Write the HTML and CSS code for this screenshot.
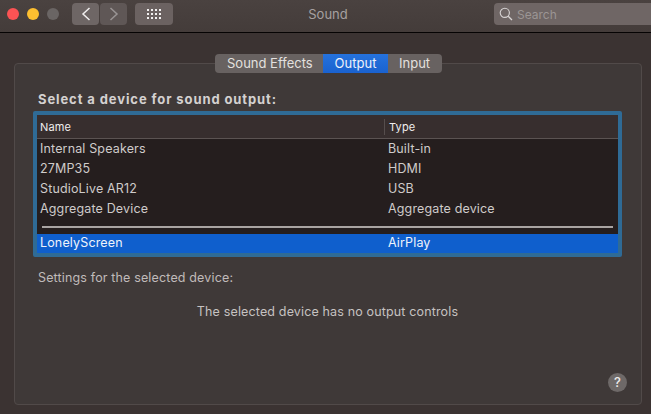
FILE: index.html
```html
<!DOCTYPE html>
<html lang="en">
<head>
<meta charset="utf-8">
<title>Sound</title>
<link rel="stylesheet" href="styles.css">
</head>
<body>
<div class="window">
  <header class="titlebar">
    <div class="lights">
      <span class="light red"></span>
      <span class="light yellow"></span>
      <span class="light grey"></span>
    </div>
    <div class="nav">
      <button class="tbtn back"><svg width="10" height="14" viewBox="0 0 10 14"><path d="M8.5 1 L2 7 L8.5 13" fill="none" stroke="#f0eeee" stroke-width="1.5"/></svg></button>
      <button class="tbtn fwd"><svg width="10" height="14" viewBox="0 0 10 14"><path d="M1.5 1 L8 7 L1.5 13" fill="none" stroke="#999494" stroke-width="1.5"/></svg></button>
    </div>
    <button class="tbtn grid"><svg width="15" height="11" viewBox="0 0 15 11" fill="#f2f0f0"><rect x="0" y="0" width="2" height="2"/><rect x="4" y="0" width="2" height="2"/><rect x="8" y="0" width="2" height="2"/><rect x="12" y="0" width="2" height="2"/><rect x="0" y="4" width="2" height="2"/><rect x="4" y="4" width="2" height="2"/><rect x="8" y="4" width="2" height="2"/><rect x="12" y="4" width="2" height="2"/><rect x="0" y="8" width="2" height="2"/><rect x="4" y="8" width="2" height="2"/><rect x="8" y="8" width="2" height="2"/><rect x="12" y="8" width="2" height="2"/></svg></button>
    <div class="title">Sound</div>
    <div class="search">
      <svg width="14" height="14" viewBox="0 0 14 14"><circle cx="5.8" cy="5.8" r="4.6" fill="none" stroke="#d8d4d4" stroke-width="1.1"/><path d="M9.2 9.2 L13 13" stroke="#d8d4d4" stroke-width="1.3"/></svg>
      <span>Search</span>
    </div>
  </header>
  <main class="content">
    <div class="panel">
      <nav class="tabs">
        <span class="tab effects">Sound Effects</span>
        <span class="tab active">Output</span>
        <span class="tab input">Input</span>
      </nav>
      <h2 class="heading">Select a device for sound output:</h2>
      <div class="table">
        <div class="thead">
          <div class="th name">Name</div>
          <div class="th type">Type</div>
        </div>
        <div class="tbody">
          <div class="row"><span class="name">Internal Speakers</span><span class="type">Built-in</span></div>
          <div class="row"><span class="name">27MP35</span><span class="type">HDMI</span></div>
          <div class="row"><span class="name">StudioLive AR12</span><span class="type">USB</span></div>
          <div class="row"><span class="name">Aggregate Device</span><span class="type">Aggregate device</span></div>
          <div class="sep"></div>
          <div class="row selected"><span class="name">LonelyScreen</span><span class="type">AirPlay</span></div>
        </div>
      </div>
      <p class="settings">Settings for the selected device:</p>
      <p class="none">The selected device has no output controls</p>
      <div class="help-row"><span class="help">?</span></div>
    </div>
  </main>
</div>
</body>
</html>
```
FILE: styles.css
```css
* { box-sizing: border-box; }
html, body { margin: 0; padding: 0; }
body {
  width: 651px;
  height: 414px;
  overflow: hidden;
  background: #3b3332;
  font-family: Inter, "Liberation Sans", sans-serif;
  font-size: 12.5px;
  letter-spacing: 0.15px;
  color: #cfcbca;
}
.window { display: flex; flex-direction: column; height: 414px; }
.titlebar {
  position: relative;
  flex: none;
  height: 33px;
  display: flex;
  align-items: center;
  padding: 0 0 4px 7px;
  background: linear-gradient(#4a4240, #443c3a);
  border-bottom: 1px solid #050303;
}
.lights { display: flex; gap: 8px; }
.light { width: 12px; height: 12px; border-radius: 50%; }
.red { background: #fb5354; }
.yellow { background: #fdbf30; }
.grey { background: #6a6564; }
.nav { display: flex; gap: 1px; margin-left: 13px; }
.tbtn {
  display: flex;
  align-items: center;
  justify-content: center;
  height: 22px;
  padding: 0;
  border: 0;
  border-radius: 4px;
  background: #6b6261;
}
.back { width: 27px; background: #6e6665; }
.fwd { width: 27px; background: #5f5756; }
.grid { width: 38px; margin-left: 8px; }
.title {
  position: absolute;
  left: 0;
  right: 0;
  top: 6px;
  text-align: center;
  font-size: 13px;
  line-height: 16px;
  letter-spacing: 0;
  color: #a6a1a0;
  padding-left: 5px;
}
.search {
  display: flex;
  align-items: center;
  gap: 4px;
  width: 157px;
  height: 22px;
  margin-left: auto;
  padding-left: 5px;
  border-radius: 4px 0 0 4px;
  background: #6f6665;
  color: #9b9594;
  font-size: 12px;
  letter-spacing: 0;
}
.content { flex: 1; padding: 30px 9px 9px 14px; }
.panel {
  height: 342px;
  border: 1px solid #514a49;
  border-radius: 4px;
  background: #3f3938;
  padding: 0 19px 0 18px;
  display: flex;
  flex-direction: column;
}
.tabs {
  align-self: center;
  display: flex;
  height: 19px;
  margin: -10px 0 0 2px;
  border-radius: 4px;
  overflow: hidden;
  background: #686261;
  color: #e3e0df;
  font-size: 13px;
  line-height: 19px;
  letter-spacing: 0;
}
.tab { display: block; }
.effects { width: 108px; padding-left: 12px; }
.active { width: 65px; text-align: center; background: linear-gradient(#2572dd, #1a62cf); color: #eef2fa; }
.input { width: 54px; padding-left: 11px; }
.heading {
  margin: 18px 0 0 5px;
  font-size: 13px;
  line-height: 16px;
  letter-spacing: 0.9px;
  font-weight: 700;
  color: #d4d1d0;
}
.table {
  margin: 4px 0 0 0;
  width: 589px;
  height: 146px;
  border: 4px solid #2f6b96;
  border-radius: 2px;
  background: #251e1e;
  display: flex;
  flex-direction: column;
}
.thead {
  flex: none;
  height: 24px;
  display: flex;
  align-items: center;
  background: #372e2e;
  border-bottom: 1px solid #5b5352;
  color: #efeded;
  font-size: 11px;
  padding-top: 1px;
}
.th.name { width: 347px; padding-left: 3px; }
.th.type {
  height: 16px;
  margin-top: -1px;
  line-height: 16px;
  border-left: 1px solid #564e4d;
  padding-left: 4px;
}
.tbody { flex: 1; padding-top: 0; display: flex; flex-direction: column; }
.row {
  flex: none;
  height: 20px;
  display: flex;
  align-items: center;
  line-height: 20px;
}
.row .name { width: 351px; padding-left: 3px; }
.sep {
  height: 2px;
  margin: 7px 5px 6px;
  background: #a9a4a2;
}
.row.selected {
  height: 19px;
  padding-bottom: 2px;
  background: #0f5fcd;
  color: #eef3fb;
}
.settings {
  margin: 13px 0 0 5px;
  line-height: 16px;
  color: #c0bbba;
}
.none {
  margin: 18px 0 0 0;
  line-height: 16px;
  text-align: center;
  color: #c6c2c1;
}
.help-row { margin-top: auto; display: flex; justify-content: flex-end; padding-bottom: 12px; }
.help {
  width: 19px;
  height: 19px;
  margin-right: -5px;
  border-radius: 50%;
  background: #6e6968;
  color: #eeeceb;
  font-size: 13px;
  font-weight: 500;
  line-height: 19px;
  text-align: center;
}
```
